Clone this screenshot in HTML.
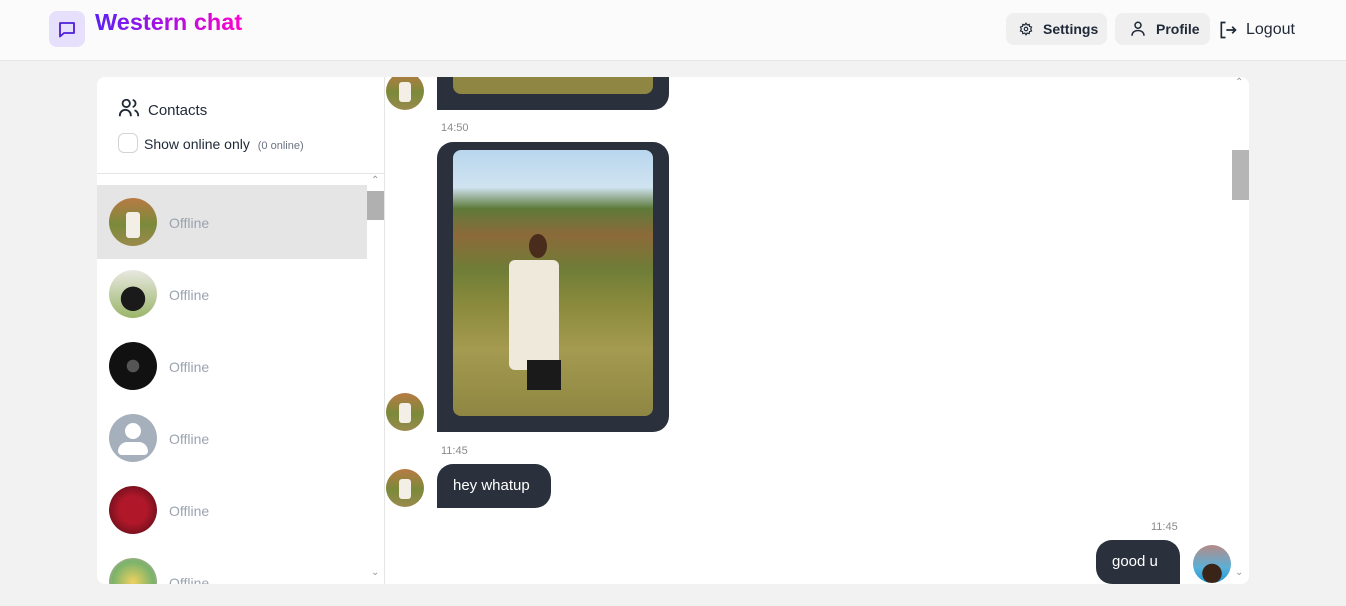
<!DOCTYPE html>
<html><head><meta charset="utf-8"><style>
*{box-sizing:border-box;margin:0;padding:0}
body{width:1346px;height:606px;background:#f2f2f2;font-family:"Liberation Sans",sans-serif;position:relative;overflow:hidden;color:#1f2937}
.hdr{position:absolute;left:0;top:0;width:1346px;height:61px;background:#fbfbfb;border-bottom:1px solid #e5e5e5}
.logo{position:absolute;left:49px;top:11px;width:36px;height:36px;border-radius:8px;background:#e6e0fd}
.title{position:absolute;left:95px;top:9px;font-size:23.5px;font-weight:bold;background:linear-gradient(90deg,#5b21f5,#ff00cc);-webkit-background-clip:text;color:transparent}
.btn{position:absolute;top:13px;height:32px;border-radius:8px;background:#efefef;font-size:14px;font-weight:bold;line-height:32px;color:#1f2937}
.card{position:absolute;left:97px;top:77px;width:1152px;height:507px;background:#fff;border-radius:8px;overflow:hidden}
.side{position:absolute;left:0;top:0;width:288px;height:507px;border-right:1px solid #e5e5e5}
.av{position:absolute;width:48px;height:48px;border-radius:50%}
.off{position:absolute;left:72px;font-size:14px;color:#9ca3af}
.small{position:absolute;width:38px;height:38px;border-radius:50%;overflow:hidden;background:linear-gradient(#b87a44,#7a8a3a 55%,#9b8a4d)}
.small::after{content:"";position:absolute;left:13px;top:10px;width:12px;height:20px;background:#f3efe6;border-radius:3px}
.bub{position:absolute;background:#2a303c;border-radius:16px}
.time{position:absolute;font-size:11px;color:#8b8b8b}
.photo{position:absolute;border-radius:8px;background:linear-gradient(180deg,#b9d6ee 0%,#cfe3f0 14%,#5e7a3a 22%,#8c6a3a 32%,#6f7d37 45%,#8a8a3c 58%,#a49a50 75%,#8e8642 100%)}
</style></head><body>
<div class="hdr">
 <div class="logo"><svg width="36" height="36" viewBox="0 0 36 36"><path d="M11 12h14v10H15l-4 3.5z" fill="none" stroke="#4c1dd9" stroke-width="1.8" stroke-linejoin="round"/></svg></div>
 <div class="title">Western chat</div>
 <div class="btn" style="left:1006px;width:101px;padding-left:37px">Settings<svg style="position:absolute;left:13px;top:9px" width="14" height="14" viewBox="0 0 24 24" fill="none" stroke="#1f2937" stroke-width="2"><circle cx="12" cy="12" r="3"/><path d="M12 2l2 3 3.5-1 .5 3.5 3.5 1-1.5 3.5 1.5 3.5-3.5 1-.5 3.5-3.5-1-2 3-2-3-3.5 1-.5-3.5-3.5-1L4 12 2.5 8.5 6 7.5 6.5 4 10 5z"/></svg></div>
 <div class="btn" style="left:1115px;width:95px;padding-left:41px">Profile<svg style="position:absolute;left:14px;top:7px" width="18" height="18" viewBox="0 0 24 24" fill="none" stroke="#1f2937" stroke-width="2"><circle cx="12" cy="7" r="4"/><path d="M4 21c0-5 4-7 8-7s8 2 8 7"/></svg></div>
 <svg style="position:absolute;left:1218px;top:20px" width="20" height="20" viewBox="0 0 24 24" fill="none" stroke="#1f2937" stroke-width="2"><path d="M9 3H4v18h5M10 12h11M17 8l4 4-4 4"/></svg>
 <div style="position:absolute;left:1246px;top:21px;font-size:16px;color:#1f2937">Logout</div>
</div>
<div class="card">
 <div class="side">
  <svg style="position:absolute;left:21px;top:20px" width="22" height="22" viewBox="0 0 24 24" fill="none" stroke="#1f2937" stroke-width="2"><circle cx="9" cy="7" r="4"/><path d="M2 21v-1a6 6 0 0 1 12 0v1M16 3.1a4 4 0 0 1 0 7.8M22 21v-1a6 6 0 0 0-4-5.6"/></svg>
  <div style="position:absolute;left:51px;top:25px;font-size:15px">Contacts</div>
  <div style="position:absolute;left:21px;top:56px;width:20px;height:20px;border:1px solid #d4d4d4;border-radius:6px"></div>
  <div style="position:absolute;left:47px;top:59px;font-size:14px">Show online only <span style="font-size:11px;color:#6b7280;margin-left:4px">(0 online)</span></div>
  <div style="position:absolute;left:0;top:96px;width:288px;border-top:1px solid #e5e5e5"></div>
  <div style="position:absolute;left:0;top:108px;width:270px;height:74px;background:#e4e5e4"></div>
  <div style="position:absolute;left:270px;top:114px;width:17px;height:29px;background:#b0b0b0"></div>
  <div style="position:absolute;left:274px;top:98px;font-size:10px;color:#999">&#8963;</div>
  <div style="position:absolute;left:274px;top:490px;font-size:10px;color:#999">&#8964;</div>
  <div class="av" style="left:12px;top:121px;overflow:hidden;background:linear-gradient(#b87a44,#7a8a3a 55%,#9b8a4d)"><div style="position:absolute;left:17px;top:14px;width:14px;height:26px;background:#f3efe6;border-radius:3px"></div></div><div class="off" style="top:138px">Offline</div>
  <div class="av" style="left:12px;top:193px;background:radial-gradient(circle at 50% 60%,#1a1a1a 0 32%,transparent 33%),linear-gradient(#e8e8e0,#9ab56a)"></div><div class="off" style="top:210px">Offline</div>
  <div class="av" style="left:12px;top:265px;background:radial-gradient(circle at 50% 50%,#555 0 18%,#111 19%)"></div><div class="off" style="top:282px">Offline</div>
  <div class="av" style="left:12px;top:337px;background:#a6b0bd"><div style="position:absolute;left:16px;top:9px;width:16px;height:16px;border-radius:50%;background:#fff"></div><div style="position:absolute;left:9px;top:28px;width:30px;height:13px;border-radius:15px 15px 6px 6px;background:#fff"></div></div><div class="off" style="top:354px">Offline</div>
  <div class="av" style="left:12px;top:409px;background:radial-gradient(circle,#b0182a 0 40%,#4a0a14)"></div><div class="off" style="top:426px">Offline</div>
  <div class="av" style="left:12px;top:481px;background:radial-gradient(circle,#f0d060,#7ab36a 60%,#e4a0c0)"></div><div class="off" style="top:498px">Offline</div>
 </div>
 <div class="bub" style="left:340px;top:-20px;width:232px;height:53px;border-bottom-left-radius:0"></div>
 <div class="photo" style="left:356px;top:-20px;width:200px;height:37px;background:#8e8642"></div>
 <div class="small" style="left:289px;top:-5px"></div>
 <div class="time" style="left:344px;top:45px">14:50</div>
 <div class="bub" style="left:340px;top:65px;width:232px;height:290px;border-bottom-left-radius:0"></div>
 <div class="photo" style="left:356px;top:73px;width:200px;height:266px"><div style="position:absolute;left:56px;top:110px;width:50px;height:110px;background:#efe9dc;border-radius:6px"></div><div style="position:absolute;left:76px;top:84px;width:18px;height:24px;background:#4a2c1c;border-radius:50%"></div><div style="position:absolute;left:74px;top:210px;width:34px;height:30px;background:#1a1a1a"></div></div>
 <div class="small" style="left:289px;top:316px"></div>
 <div class="time" style="left:344px;top:368px">11:45</div>
 <div class="bub" style="left:340px;top:387px;width:114px;height:44px;border-bottom-left-radius:0;color:#fff;font-size:15px;line-height:44px;padding-left:16px">hey whatup</div>
 <div class="small" style="left:289px;top:392px"></div>
 <div class="time" style="left:1054px;top:444px">11:45</div>
 <div class="bub" style="left:999px;top:463px;width:84px;height:44px;border-bottom-right-radius:0;color:#fff;font-size:15px;line-height:44px;padding-left:16px">good u</div>
 <div style="position:absolute;width:38px;height:38px;border-radius:50%;left:1096px;top:468px;background:radial-gradient(circle at 50% 75%,#3a2418 0 28%,transparent 29%),linear-gradient(#b58a88,#5ab0d8 60%,#1a9ad8)"></div>
 <div style="position:absolute;left:1135px;top:73px;width:17px;height:50px;background:#b5b5b5"></div>
 <div style="position:absolute;left:1138px;top:0;font-size:10px;color:#999">&#8963;</div>
 <div style="position:absolute;left:1138px;top:490px;font-size:10px;color:#999">&#8964;</div>
</div>
</body></html>
